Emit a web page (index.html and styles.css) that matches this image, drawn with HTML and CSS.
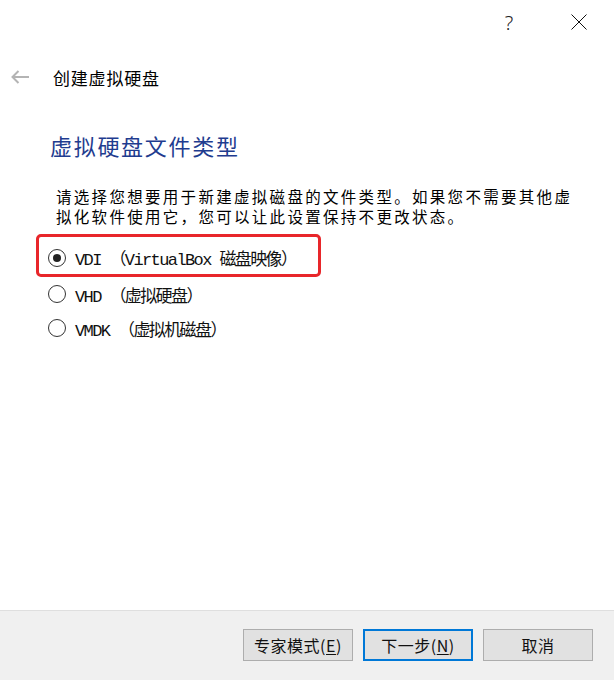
FILE: index.html
```html
<!DOCTYPE html>
<html lang="zh-CN">
<head>
    <meta charset="UTF-8">
    <meta name="viewport" content="width=device-width, initial-scale=1.0">
    <title>创建虚拟硬盘</title>
    <link rel="stylesheet" href="styles.css">
</head>
<body>
    <div class="dialog">
        <div class="titlebar">
            <button class="title-btn help-btn">?</button>
            <button class="title-btn close-btn">
                <svg width="16" height="16" viewBox="0 0 16 16">
                    <path d="M0.5 0.5 L15.5 15.5 M15.5 0.5 L0.5 15.5" stroke="#111" stroke-width="1" fill="none"/>
                </svg>
            </button>
        </div>

        <div class="wizard-header">
            <span class="back-arrow">
                <svg width="20" height="14" viewBox="0 0 20 14">
                    <path d="M19 7 H2.5 M8.5 1 L2.5 7 L8.5 13" stroke="#b4b4b4" stroke-width="2" fill="none"/>
                </svg>
            </span>
            <span class="wizard-title">创建虚拟硬盘</span>
        </div>

        <div class="content">
            <h2>虚拟硬盘文件类型</h2>
            <p class="desc">请选择您想要用于新建虚拟磁盘的文件类型。如果您不需要其他虚拟化软件使用它，您可以让此设置保持不更改状态。</p>

            <div class="options">
                <label class="option highlight">
                    <span class="radio checked"></span>
                    <span class="option-text">VDI （VirtualBox 磁盘映像）</span>
                </label>
                <label class="option">
                    <span class="radio"></span>
                    <span class="option-text">VHD （虚拟硬盘）</span>
                </label>
                <label class="option">
                    <span class="radio"></span>
                    <span class="option-text">VMDK （虚拟机磁盘）</span>
                </label>
            </div>
        </div>

        <div class="footer">
            <button class="btn">专家模式(<u>E</u>)</button>
            <button class="btn default">下一步(<u>N</u>)</button>
            <button class="btn">取消</button>
        </div>
    </div>
</body>
</html>
```

FILE: styles.css
```css
* {
    margin: 0;
    padding: 0;
    box-sizing: border-box;
}

body {
    font-family: "Noto Sans CJK SC", "Noto Sans", sans-serif;
    background: #ffffff;
    color: #000000;
}

.dialog {
    width: 100%;
    height: 100vh;
    display: flex;
    flex-direction: column;
}

.titlebar {
    height: 44px;
    display: flex;
    justify-content: flex-end;
    align-items: center;
    gap: 24px;
    padding-right: 12px;
}

.title-btn {
    width: 46px;
    height: 44px;
    border: none;
    background: transparent;
    display: flex;
    align-items: center;
    justify-content: center;
}

.help-btn {
    font-family: "Noto Sans", sans-serif;
    font-size: 20px;
    font-weight: 300;
    color: #222;
}

.wizard-header {
    display: flex;
    align-items: center;
    height: 30px;
    margin-top: 18px;
    padding-left: 10px;
}

.back-arrow {
    display: flex;
    width: 43px;
}

.wizard-title {
    font-size: 17px;
    letter-spacing: 0.8px;
}

.content {
    flex-grow: 1;
}

h2 {
    font-size: 22px;
    font-weight: 400;
    letter-spacing: 1.7px;
    color: #1f3c8f;
    line-height: 30px;
    margin: 38px 0 0 50px;
}

.desc {
    font-size: 15.5px;
    line-height: 20px;
    letter-spacing: 2.3px;
    margin: 26px 35px 0 56px;
}

.options {
    display: flex;
    flex-direction: column;
    margin-top: 8px;
    padding-left: 48px;
}

.option {
    display: flex;
    align-items: center;
    height: 34px;
    gap: 9px;
}

.option.highlight {
    width: 285px;
    height: 43px;
    margin-left: -12px;
    padding: 4px 0 0 9px;
    border: 3px solid #e8262a;
    border-radius: 5px;
}

.radio {
    width: 18px;
    height: 18px;
    border: 1.5px solid #333;
    border-radius: 50%;
    display: flex;
    align-items: center;
    justify-content: center;
}

.radio.checked::after {
    content: "";
    width: 8px;
    height: 8px;
    border-radius: 50%;
    background: #222;
}

.option-text {
    font-family: "Liberation Mono", "Noto Sans CJK SC", monospace;
    font-size: 17px;
    letter-spacing: -1.6px;
    color: #111;
}

.footer {
    height: 70px;
    background: #f0f0f0;
    border-top: 1px solid #dfdfdf;
    display: flex;
    justify-content: flex-end;
    align-items: flex-start;
    gap: 10px;
    padding: 18px 21px 0 0;
}

.btn {
    width: 110px;
    height: 32px;
    background: #e1e1e1;
    border: 1px solid #adadad;
    font-family: "Noto Sans CJK SC", sans-serif;
    font-size: 16px;
    color: #111;
    letter-spacing: 0.5px;
}

.btn.default {
    border: 2px solid #0078d7;
}

.btn u {
    text-underline-offset: 2px;
}
```
